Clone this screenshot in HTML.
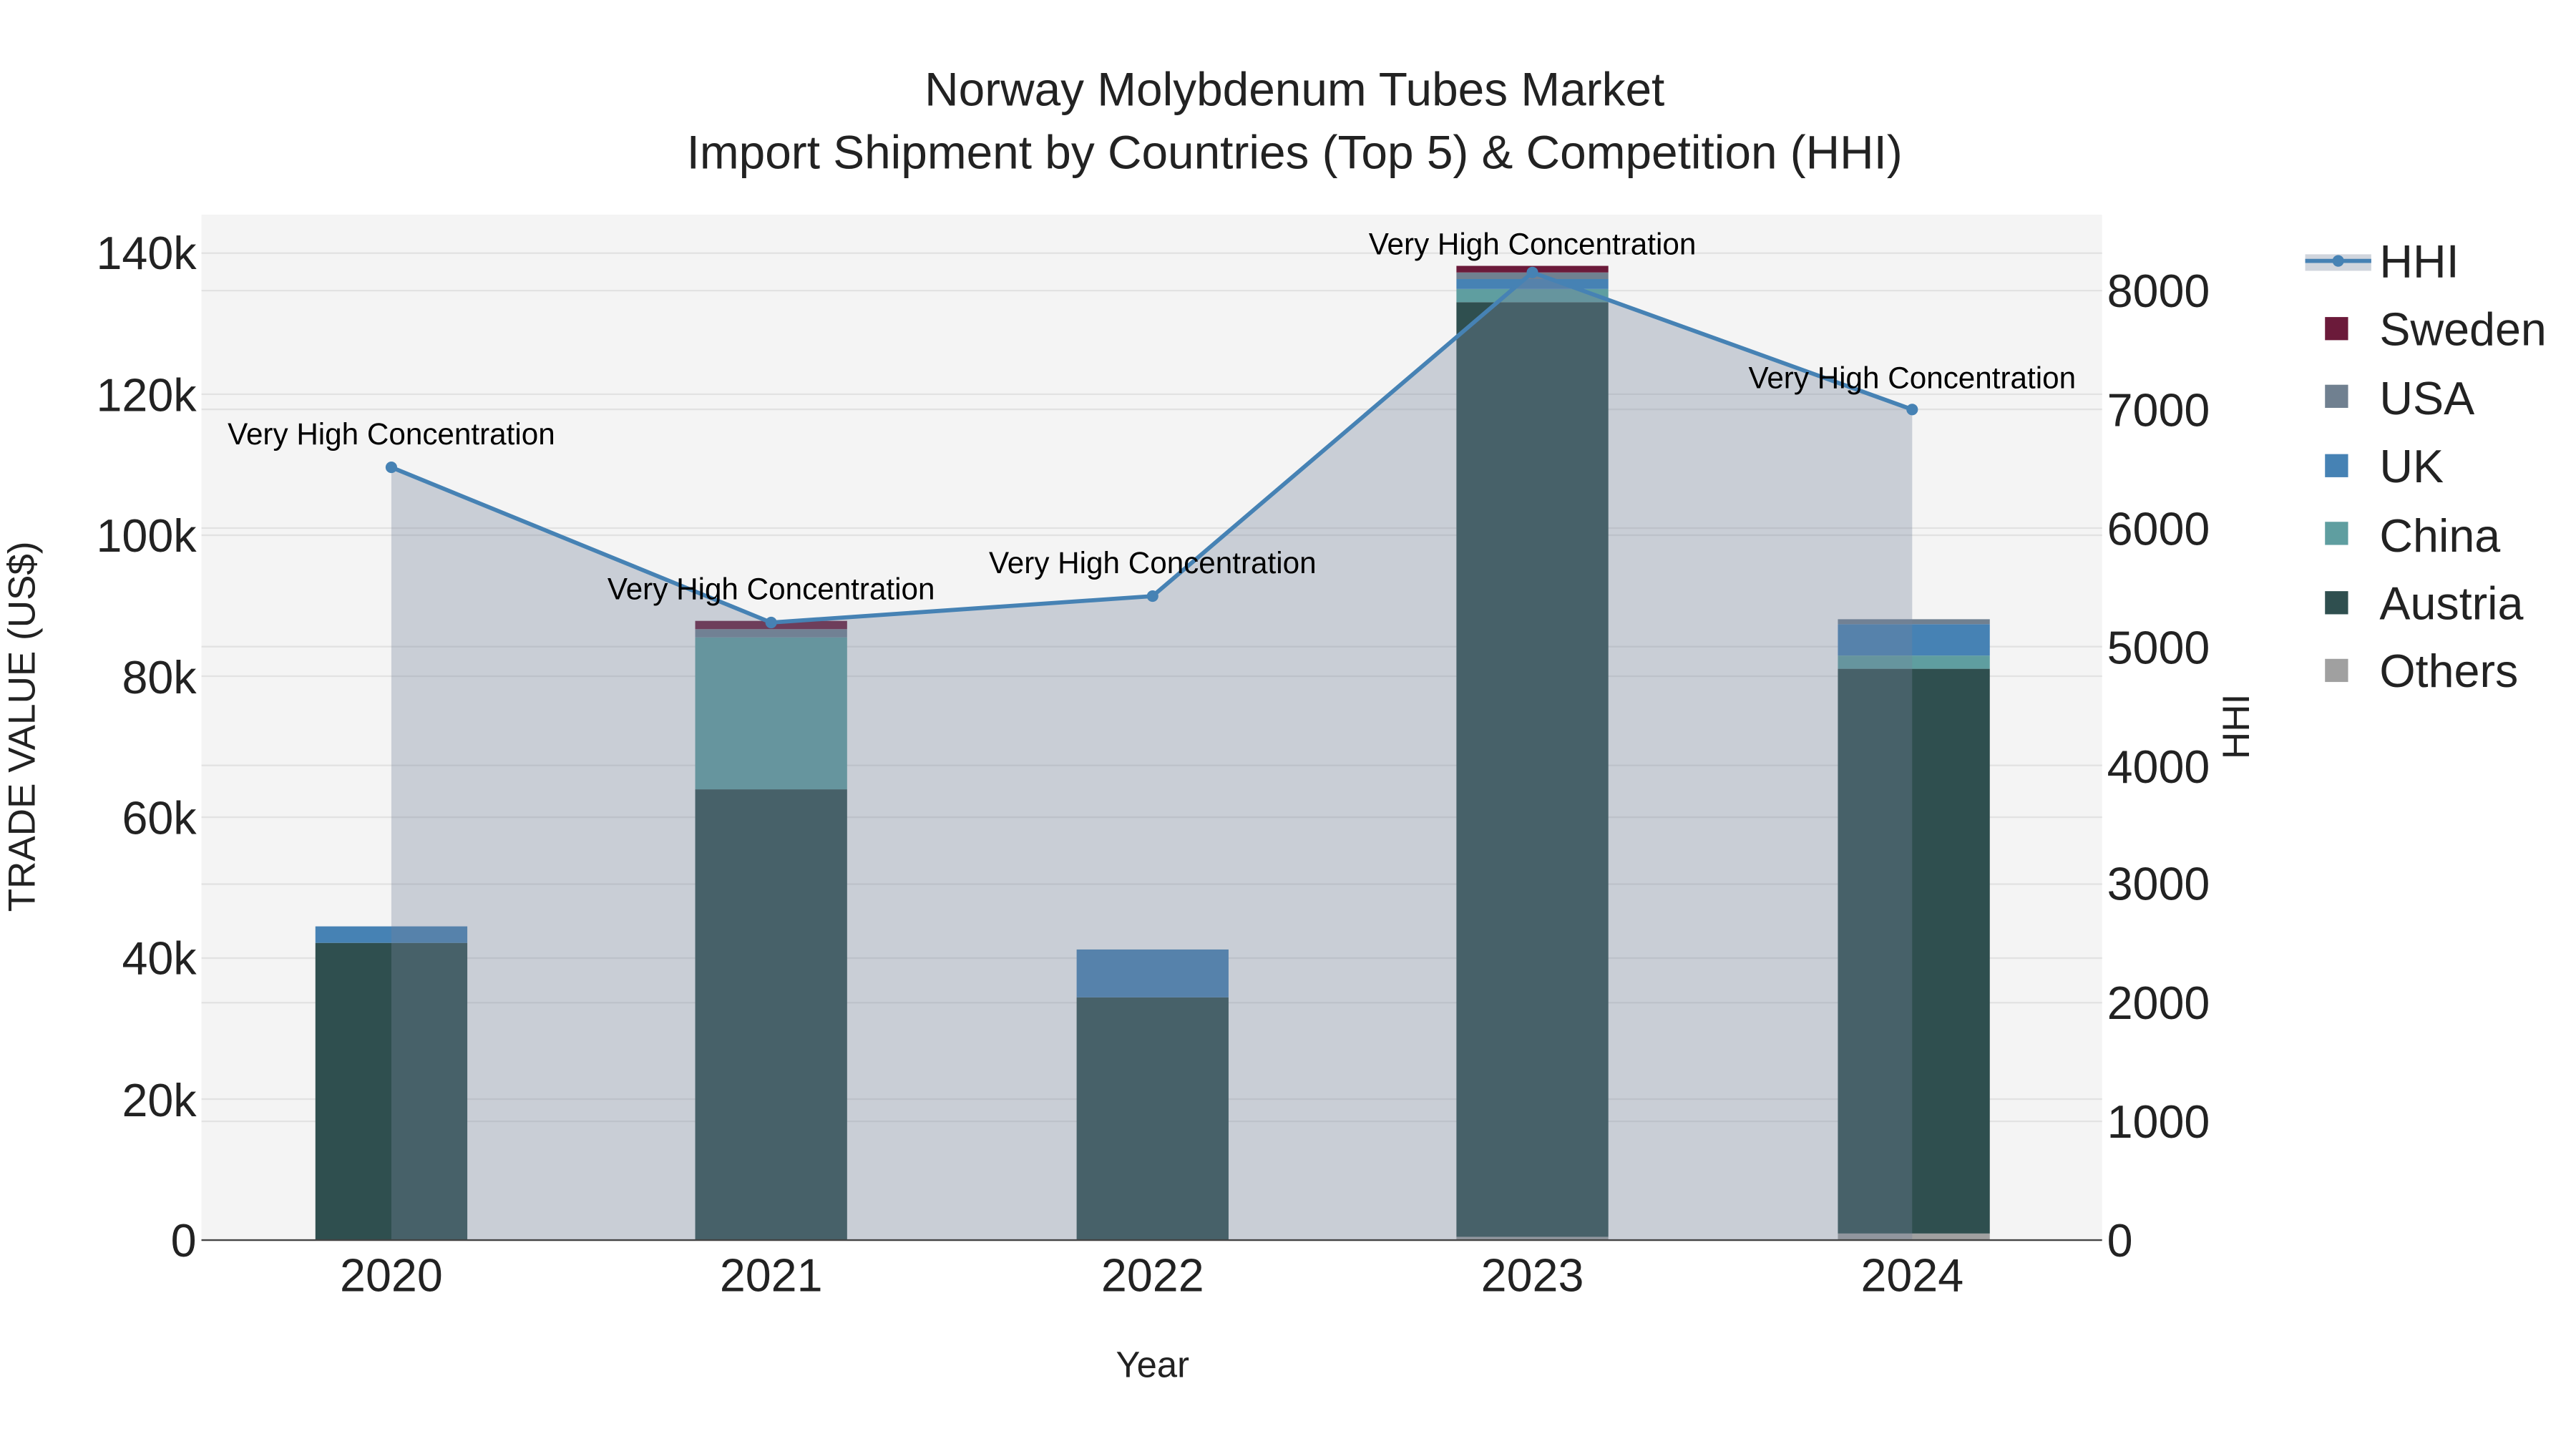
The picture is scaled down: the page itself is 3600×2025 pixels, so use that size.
<!DOCTYPE html>
<html><head><meta charset="utf-8"><style>html,body{margin:0;padding:0;background:#fff}svg{display:block}</style></head><body>
<svg width="3600" height="2025" viewBox="0 0 1560 877.5" xmlns="http://www.w3.org/2000/svg" font-family="Liberation Sans, sans-serif">
<rect width="1560" height="877.5" fill="#fff"/>
<rect x="122" y="130" width="1151" height="621" fill="#f4f4f4"/>
<g stroke="#e2e2e2" stroke-width="1">
<line x1="122" x2="1273" y1="665.6" y2="665.6"/><line x1="122" x2="1273" y1="580.2" y2="580.2"/><line x1="122" x2="1273" y1="494.9" y2="494.9"/><line x1="122" x2="1273" y1="409.5" y2="409.5"/><line x1="122" x2="1273" y1="324.1" y2="324.1"/><line x1="122" x2="1273" y1="238.7" y2="238.7"/><line x1="122" x2="1273" y1="153.3" y2="153.3"/>
<line x1="122" x2="1273" y1="679.1" y2="679.1"/><line x1="122" x2="1273" y1="607.2" y2="607.2"/><line x1="122" x2="1273" y1="535.4" y2="535.4"/><line x1="122" x2="1273" y1="463.5" y2="463.5"/><line x1="122" x2="1273" y1="391.6" y2="391.6"/><line x1="122" x2="1273" y1="319.8" y2="319.8"/><line x1="122" x2="1273" y1="247.9" y2="247.9"/><line x1="122" x2="1273" y1="176" y2="176"/>
</g>
<rect x="191" y="571" width="92" height="180" fill="#2f4f4f"/><rect x="191" y="561" width="92" height="10" fill="#4682b4"/>
<rect x="421" y="478" width="92" height="273" fill="#2f4f4f"/><rect x="421" y="386" width="92" height="92" fill="#5f9ea0"/><rect x="421" y="381" width="92" height="5" fill="#708090"/><rect x="421" y="376" width="92" height="5" fill="#6b1a3a"/>
<rect x="652" y="604" width="92" height="147" fill="#2f4f4f"/><rect x="652" y="575" width="92" height="29" fill="#4682b4"/>
<rect x="882" y="749" width="92" height="2" fill="#a0a0a0"/><rect x="882" y="183" width="92" height="566" fill="#2f4f4f"/><rect x="882" y="175" width="92" height="8" fill="#5f9ea0"/><rect x="882" y="169" width="92" height="6" fill="#4682b4"/><rect x="882" y="165" width="92" height="4" fill="#708090"/><rect x="882" y="161" width="92" height="4" fill="#6b1a3a"/>
<rect x="1113" y="747" width="92" height="4" fill="#a0a0a0"/><rect x="1113" y="405" width="92" height="342" fill="#2f4f4f"/><rect x="1113" y="397" width="92" height="8" fill="#5f9ea0"/><rect x="1113" y="378" width="92" height="19" fill="#4682b4"/><rect x="1113" y="375" width="92" height="3" fill="#708090"/>
<polygon points="237,751 237,283 467,377 698,361 928,165 1158,248 1158,751" fill="rgb(117,132,156)" fill-opacity="0.34"/>
<polyline points="237,283 467,377 698,361 928,165 1158,248" fill="none" stroke="#4682b4" stroke-width="2.5"/>
<g fill="#4682b4"><circle cx="237" cy="283" r="3.5"/><circle cx="467" cy="377" r="3.5"/><circle cx="698" cy="361" r="3.5"/><circle cx="928" cy="165" r="3.5"/><circle cx="1158" cy="248" r="3.5"/></g>
<line x1="122" x2="1273" y1="751" y2="751" stroke="#444" stroke-width="1"/>
<g font-size="18.3" text-anchor="middle" fill="#000">
<text x="237" y="269">Very High Concentration</text><text x="467" y="363">Very High Concentration</text><text x="698" y="347">Very High Concentration</text><text x="928" y="154">Very High Concentration</text><text x="1158" y="235">Very High Concentration</text>
</g>
<g font-size="28" fill="#222">
<text x="784" y="64" text-anchor="middle" font-size="28.5">Norway Molybdenum Tubes Market</text>
<text x="784" y="102" text-anchor="middle" font-size="28.5">Import Shipment by Countries (Top 5) &amp; Competition (HHI)</text>
<g text-anchor="end"><text x="119" y="761">0</text><text x="119" y="676">20k</text><text x="119" y="590">40k</text><text x="119" y="505">60k</text><text x="119" y="420">80k</text><text x="119" y="334">100k</text><text x="119" y="249">120k</text><text x="119" y="163">140k</text></g>
<g text-anchor="start"><text x="1276" y="761">0</text><text x="1276" y="689">1000</text><text x="1276" y="617">2000</text><text x="1276" y="545">3000</text><text x="1276" y="474">4000</text><text x="1276" y="402">5000</text><text x="1276" y="330">6000</text><text x="1276" y="258">7000</text><text x="1276" y="186">8000</text></g>
<g text-anchor="middle"><text x="237" y="782">2020</text><text x="467" y="782">2021</text><text x="698" y="782">2022</text><text x="928" y="782">2023</text><text x="1158" y="782">2024</text></g>
<text x="1441" y="168">HHI</text><text x="1441" y="209">Sweden</text><text x="1441" y="251">USA</text><text x="1441" y="292">UK</text><text x="1441" y="334">China</text><text x="1441" y="375">Austria</text><text x="1441" y="416">Others</text>
</g>
<text x="698" y="834" font-size="22" text-anchor="middle" fill="#222">Year</text>
<text transform="translate(21,440) rotate(-90)" font-size="23" text-anchor="middle" fill="#222">TRADE VALUE (US$)</text>
<text transform="translate(1362,440) rotate(-90)" font-size="23" text-anchor="middle" fill="#222">HHI</text>
<rect x="1396" y="154" width="40" height="10" fill="rgb(117,132,156)" fill-opacity="0.34"/>
<line x1="1396" x2="1436" y1="158" y2="158" stroke="#4682b4" stroke-width="2.5"/><circle cx="1416" cy="158" r="3.5" fill="#4682b4"/>
<rect x="1408" y="192" width="14" height="14" fill="#6b1a3a"/>
<rect x="1408" y="233" width="14" height="14" fill="#708090"/>
<rect x="1408" y="275" width="14" height="14" fill="#4682b4"/>
<rect x="1408" y="316" width="14" height="14" fill="#5f9ea0"/>
<rect x="1408" y="358" width="14" height="14" fill="#2f4f4f"/>
<rect x="1408" y="399" width="14" height="14" fill="#a0a0a0"/>
</svg>
</body></html>
